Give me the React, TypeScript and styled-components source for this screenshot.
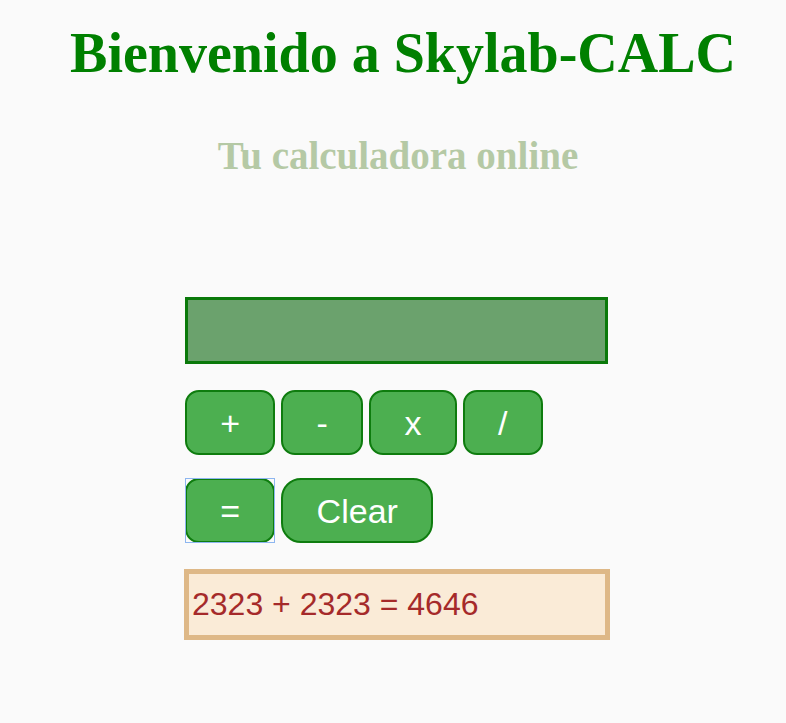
import React, { useState } from 'react';
import styled, { createGlobalStyle, css } from 'styled-components';

const GlobalStyle = createGlobalStyle`
  html, body {
    margin: 0;
    padding: 0;
    background-color: #fafafa;
  }
`;

// Page wrapper
const Page = styled.div`
  min-height: 723px;
  background-color: #fafafa;
  font-family: "Liberation Serif", "Times New Roman", serif;
`;

// Headings
const Title = styled.h1`
  margin: 21px 0 0;
  padding-left: 20px;
  text-align: center;
  font-size: 56px;
  line-height: 1.15;
  font-weight: bold;
  color: #008000;
`;

const Subtitle = styled.h2`
  margin: 49px 0 0;
  padding-left: 10px;
  text-align: center;
  font-size: 39px;
  line-height: 1.15;
  font-weight: bold;
  color: #b5c9a5;
`;

// Calculator block
const Calculator = styled.section`
  margin-top: 118px;
  padding-left: 185px;
  display: flex;
  flex-direction: column;
  align-items: flex-start;
`;

const Display = styled.div`
  box-sizing: border-box;
  width: 423px;
  height: 67px;
  border: 3px solid #0a790a;
  background-color: #6ba26d;
`;

const ButtonRow = styled.div<{ $top: number }>`
  display: flex;
  gap: 6px;
  margin-top: ${p => p.$top}px;
`;

// square focus ring, drawn over the rounded button
const focusRing = css`
  &::after {
    content: '';
    position: absolute;
    inset: -2px -2px -2px -2px;
    border: 1px solid #8db6f0;
    pointer-events: none;
  }
`;

const CalcButton = styled.button<{ $radius?: number; $focused?: boolean }>`
  position: relative;
  box-sizing: border-box;
  height: 65px;
  padding: 0 33.25px;
  border: 2px solid #0e7c0e;
  border-radius: ${p => p.$radius ?? 14}px;
  background-color: #4caf50;
  color: #ffffff;
  font-family: "Liberation Sans", Arial, sans-serif;
  font-size: 34px;
  line-height: 1;
  cursor: pointer;
  outline: none;
  ${p => p.$focused && focusRing}
`;

const Result = styled.div`
  box-sizing: border-box;
  width: 426px;
  height: 71px;
  margin-top: 26px;
  margin-left: -1px;
  padding-left: 3px;
  border: 5px solid #deb887;
  background-color: #faebd7;
  color: #a52a2a;
  font-family: "Liberation Sans", Arial, sans-serif;
  font-size: 32px;
  display: flex;
  align-items: center;
`;

const App: React.FC = () => {
  const [result] = useState('2323 + 2323 = 4646');

  return (
    <Page>
      <GlobalStyle />
      <Title>Bienvenido a Skylab-CALC</Title>
      <Subtitle>Tu calculadora online</Subtitle>
      <Calculator>
        <Display />
        <ButtonRow $top={26}>
          <CalcButton>+</CalcButton>
          <CalcButton>-</CalcButton>
          <CalcButton>x</CalcButton>
          <CalcButton>/</CalcButton>
        </ButtonRow>
        <ButtonRow $top={23}>
          <CalcButton $focused>=</CalcButton>
          <CalcButton $radius={20}>Clear</CalcButton>
        </ButtonRow>
        <Result>{result}</Result>
      </Calculator>
    </Page>
  );
};

export default App;
